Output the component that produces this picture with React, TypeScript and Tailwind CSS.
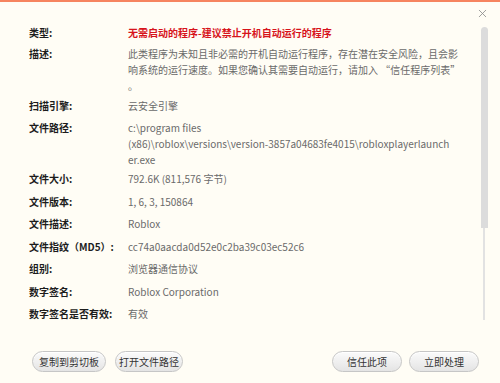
import { X } from 'lucide-react';

type Row = {
  label: string;
  lines: string[];
  mt: string;
  valueClass?: string;
};

const rows: Row[] = [
  {
    label: '类型:',
    lines: ['无需启动的程序-建议禁止开机自动运行的程序'],
    mt: 'mt-0',
    valueClass: 'text-[#d7141c] font-bold',
  },
  {
    label: '描述:',
    lines: [
      '此类程序为未知且非必需的开机自动运行程序，存在潜在安全风险，且会影',
      '响系统的运行速度。如果您确认其需要自动运行，请加入 “信任程序列表”',
      '。',
    ],
    mt: 'mt-[5px]',
  },
  { label: '扫描引擎:', lines: ['云安全引擎'], mt: 'mt-[4px]' },
  {
    label: '文件路径:',
    lines: [
      'c:\\program files',
      '(x86)\\roblox\\versions\\version-3857a04683fe4015\\robloxplayerlaunch',
      'er.exe',
    ],
    mt: 'mt-[6px]',
  },
  { label: '文件大小:', lines: ['792.6K (811,576 字节)'], mt: 'mt-[3px]' },
  { label: '文件版本:', lines: ['1, 6, 3, 150864'], mt: 'mt-[7px]' },
  { label: '文件描述:', lines: ['Roblox'], mt: 'mt-[6px]' },
  { label: '文件指纹（MD5）:', lines: ['cc74a0aacda0d52e0c2ba39c03ec52c6'], mt: 'mt-[7px]' },
  { label: '组别:', lines: ['浏览器通信协议'], mt: 'mt-[6px]' },
  { label: '数字签名:', lines: ['Roblox Corporation'], mt: 'mt-[7px]' },
  { label: '数字签名是否有效:', lines: ['有效'], mt: 'mt-[6px]' },
];

function Pill({ text, width }: { text: string; width: string }) {
  return (
    <button
      className={`${width} h-[21px] rounded-full border border-[#c6c6c6] bg-gradient-to-b from-[#fbfbfb] to-[#e4e4e4] text-[10px] leading-[19px] text-[#333] shadow-[inset_0_1px_0_#ffffff]`}
    >
      {text}
    </button>
  );
}

export default function App() {
  return (
    <div
      className="relative w-[500px] h-[383px] bg-[#fffdf5] border-t-2 border-[#f6845f] flex flex-col"
      style={{ fontFamily: '"Noto Sans CJK SC", "Noto Sans", sans-serif' }}
    >
      <button className="absolute right-[11px] top-[5px] text-[#8a8a8a]">
        <X className="h-[13px] w-[13px]" strokeWidth={1.5} />
      </button>

      <div className="flex flex-1">
        <div className="flex-1 pl-[29px] pt-[23px]">
          {rows.map((row) => (
            <div key={row.label} className={`flex ${row.mt}`}>
              <div className="w-[99px] shrink-0 text-[10px] leading-[16px] font-bold text-[#1c1c1c] whitespace-nowrap">
                {row.label}
              </div>
              <div
                className={`text-[10px] leading-[16px] whitespace-nowrap ${row.valueClass ?? 'text-[#6a6a6a]'}`}
              >
                {row.lines.map((line, i) => (
                  <div key={i}>{line}</div>
                ))}
              </div>
            </div>
          ))}
        </div>

        <div className="w-[20px] shrink-0 pt-[25px] pl-[1px] flex flex-col">
          <div className="w-[7px] h-[201px] rounded-t-full rounded-b-[2px] bg-[#dcdcdc]" />
          <div className="ml-[2px] w-[2px] h-[92px] bg-[#e2e2e2]" />
        </div>
      </div>

      <div className="flex items-center justify-between pl-[32px] pr-[21px] pb-[11px]">
        <div className="flex gap-[9px]">
          <Pill text="复制到剪切板" width="w-[74px]" />
          <Pill text="打开文件路径" width="w-[68px]" />
        </div>
        <div className="flex gap-[7px]">
          <Pill text="信任此项" width="w-[70px]" />
          <Pill text="立即处理" width="w-[70px]" />
        </div>
      </div>
    </div>
  );
}
